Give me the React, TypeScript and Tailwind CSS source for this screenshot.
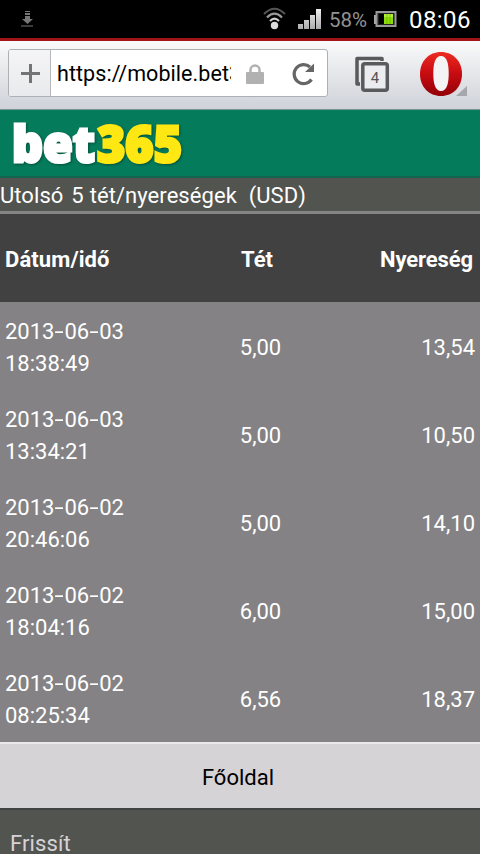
const bets = [
  { date: "2013-06-03", time: "18:38:49", stake: "5,00", win: "13,54" },
  { date: "2013-06-03", time: "13:34:21", stake: "5,00", win: "10,50" },
  { date: "2013-06-02", time: "20:46:06", stake: "5,00", win: "14,10" },
  { date: "2013-06-02", time: "18:04:16", stake: "6,00", win: "15,00" },
  { date: "2013-06-02", time: "08:25:34", stake: "6,56", win: "18,37" },
];

function StatusBar() {
  return (
    <div className="flex h-[38px] items-center bg-black">
      <svg className="ml-5 h-[38px] w-4" viewBox="0 0 16 38" fill="#777">
        <path d="M5 11h5v1H5zM5 13h5v2H5zM5 16h5v3h3l-5.500 5L2 19h3zM1 25.500h12v1H1z" />
      </svg>
      <svg className="ml-[226px] h-[38px] w-6" viewBox="0 0 24 38" fill="none">
        <path d="M2 14Q12.500 3.500 23 14" stroke="#555" strokeWidth="2.200" />
        <path d="M5 17.500Q12.500 10 20 17.500" stroke="#999" strokeWidth="2.200" />
        <path d="M8 21Q12.500 16.500 17 21" stroke="#ccc" strokeWidth="2.200" />
        <circle cx="12.500" cy="25.500" r="3.700" fill="#ddd" />
      </svg>
      <svg className="ml-3 h-[38px] w-6" viewBox="0 0 24 38">
        <defs>
          <linearGradient id="bars" x1="0" x2="0" y1="0" y2="1">
            <stop stopColor="#eee" />
            <stop offset="1" stopColor="#aaa" />
          </linearGradient>
        </defs>
        <path
          d="M0 24h5v5H0zM6 20h5v9H6zM12 15h5v14h-5zM18 9h5v20h-5z"
          fill="url(#bars)"
        />
      </svg>
      <span className="mt-[2px] ml-[7px] w-[39px] whitespace-nowrap text-[20.500px] text-[#929292]">
        58%
      </span>
      <svg className="ml-[6px] h-[38px] w-6" viewBox="0 0 24 38">
        <path d="M0 15h2v9H0z" fill="#aaa" />
        <rect x="2.500" y="12" width="19" height="14" fill="#222" stroke="#999" strokeWidth="2" />
        <path d="M5 14h5v10H5z" fill="#000" />
        <path d="M10 14h9v10h-9z" fill="#8edc0b" />
        <path d="M10 14h9v3h-9z" fill="#b4ef39" />
        <path d="M13 14v10M16 14v10" stroke="#5fa800" strokeWidth=".6" />
      </svg>
      <span className="mt-[2px] ml-[11px] text-[24px] tracking-[0.4px] text-white">08:06</span>
    </div>
  );
}

function Toolbar() {
  return (
    <div className="flex h-[72px] items-start border-t-[3px] border-b border-t-[#a21418] border-b-[#75958f] bg-gradient-to-b from-[#fafafa] to-[#cfd2d9]">
      <div className="mt-2 ml-2 flex h-12 w-80 overflow-hidden rounded-[3px] border border-[#adb1b4] bg-white">
        <div className="w-[42px] border-r border-[#b6b8bb] bg-gradient-to-b from-[#f5f5f6] to-[#e9eaed]">
          <svg className="h-[46px] w-[41px]" viewBox="0 0 41 46">
            <path d="M12 23.500h19M21.500 14v19" stroke="#747474" strokeWidth="3" />
          </svg>
        </div>
        <div className="ml-[6px] h-[46px] w-[174px] overflow-hidden text-[21.500px] leading-[48px] tracking-[0.060px] whitespace-nowrap text-black">
          https://mobile.bet3
        </div>
        <svg className="ml-[14px] h-[46px] w-5" viewBox="0 0 20 46">
          <path d="M5.500 25v-5a4.500 4.500 0 0 1 9 0v5" fill="none" stroke="#b1b1b1" strokeWidth="2.500" />
          <rect x="1" y="22" width="18" height="12" rx="1" fill="#b1b1b1" />
        </svg>
        <svg className="ml-[26px] h-[46px] w-6" viewBox="0 0 24 46" fill="none">
          <path d="M20.500 29.500A9.500 9.500 0 1 1 19 17" stroke="#666" strokeWidth="3.200" />
          <path d="M23 13.500v8.500h-9z" fill="#666" />
        </svg>
      </div>
      <svg className="ml-[26px] h-[68px] w-9" viewBox="0 0 36 68" fill="none">
        <path d="M28 20v-2.500H3V43h3" stroke="#595a5c" strokeWidth="3.500" strokeLinejoin="round" />
        <rect x="8.800" y="22.800" width="24.500" height="26.500" rx="2" fill="#ebecef" stroke="#595a5c" strokeWidth="3.500" />
        <text x="21" y="41.500" textAnchor="middle" fontSize="15" fill="#555">4</text>
      </svg>
      <svg className="ml-[28px] h-[68px] w-[52px]" viewBox="0 0 52 68">
        <defs>
          <linearGradient id="opera" x1="0" x2="0" y1="0" y2="1">
            <stop stopColor="#ec2b22" />
            <stop offset=".45" stopColor="#cb0d12" />
            <stop offset="1" stopColor="#920008" />
          </linearGradient>
        </defs>
        <path d="M49 45v10H38z" fill="#a4a7ac" />
        <path
          d="M23 11C35 11 44 20 44 33S35 55 23 55 2 46 2 33 11 11 23 11Z"
          fill="url(#opera)"
        />
        <path d="M23 15C17 15 15.300 23 15.300 32.500S17 50 23 50 30.700 42 30.700 32.500 29 15 23 15Z" fill="#f4f4f5" />
      </svg>
    </div>
  );
}

function Logo() {
  return (
    <div className="h-[68px] border-t border-b-2 border-t-[#0b7b62] border-b-[#14634f] bg-[#047b5b]">
      <svg
        className="h-[65px] w-[200px] font-['Noto_Sans'] font-black drop-shadow-[1px_1px_1px_#02513c]"
        viewBox="0 0 200 65"
        fontSize="49"
        strokeWidth="3"
      >
        <text x="12" y="51" textLength="83" lengthAdjust="spacingAndGlyphs" fill="#fff" stroke="#fff">
          bet
        </text>
        <text x="97" y="51" textLength="85" lengthAdjust="spacingAndGlyphs" fill="#ffe713" stroke="#ffe713">
          365
        </text>
      </svg>
    </div>
  );
}

function BetDate({ value }: { value: string }) {
  const [year, month, day] = value.split("-");
  const dash = <span className="inline-block w-[10px] origin-center scale-x-150 text-center">-</span>;

  return (
    <div>
      {year}
      {dash}
      {month}
      {dash}
      {day}
    </div>
  );
}

export default function App() {
  return (
    <main className="h-[854px] w-[480px] overflow-hidden bg-[#525450] font-['Roboto',sans-serif] text-[22px] text-white">
      <StatusBar />
      <Toolbar />
      <Logo />

      <h1 className="h-9 border-b-[3px] border-[#858585] bg-[#525450] leading-[35px] tracking-[0.060px] [word-spacing:0.4px] whitespace-pre">
        Utolsó <span className="ml-[2px]">5</span> tét/nyereségek  (USD)
      </h1>

      <table className="w-full table-fixed border-collapse">
        <thead>
          <tr className="h-[88px] bg-[#414141]">
            <th className="w-[212px] pt-[2px] pl-[5px] text-left font-bold tracking-[0.1px]">Dátum/idő</th>
            <th className="w-[90px] pt-[2px] text-center font-bold">Tét</th>
            <th className="pt-[2px] pr-[7px] text-right font-bold tracking-[-0.1px]">Nyereség</th>
          </tr>
        </thead>
        <tbody className="bg-[#848284]">
          {bets.map((bet) => (
            <tr key={bet.date + bet.time} className="h-[88px]">
              <td className="pt-[3px] pl-[5px] leading-8">
                <BetDate value={bet.date} />
                <div>{bet.time}</div>
              </td>
              <td className="pt-[2px] pl-[7px] text-center">{bet.stake}</td>
              <td className="pt-[2px] pr-[5px] text-right">{bet.win}</td>
            </tr>
          ))}
        </tbody>
      </table>

      <div className="h-[68px] border-t-2 border-b-2 border-t-[#ebe8eb] border-b-[#414141] bg-[#d6d3d6] pr-1 text-center leading-[68px] text-black">
        Főoldal
      </div>
      <div className="pl-[10px] leading-[68px] tracking-[0.1px] text-[#d6d3d6]">Frissít</div>
    </main>
  );
}
